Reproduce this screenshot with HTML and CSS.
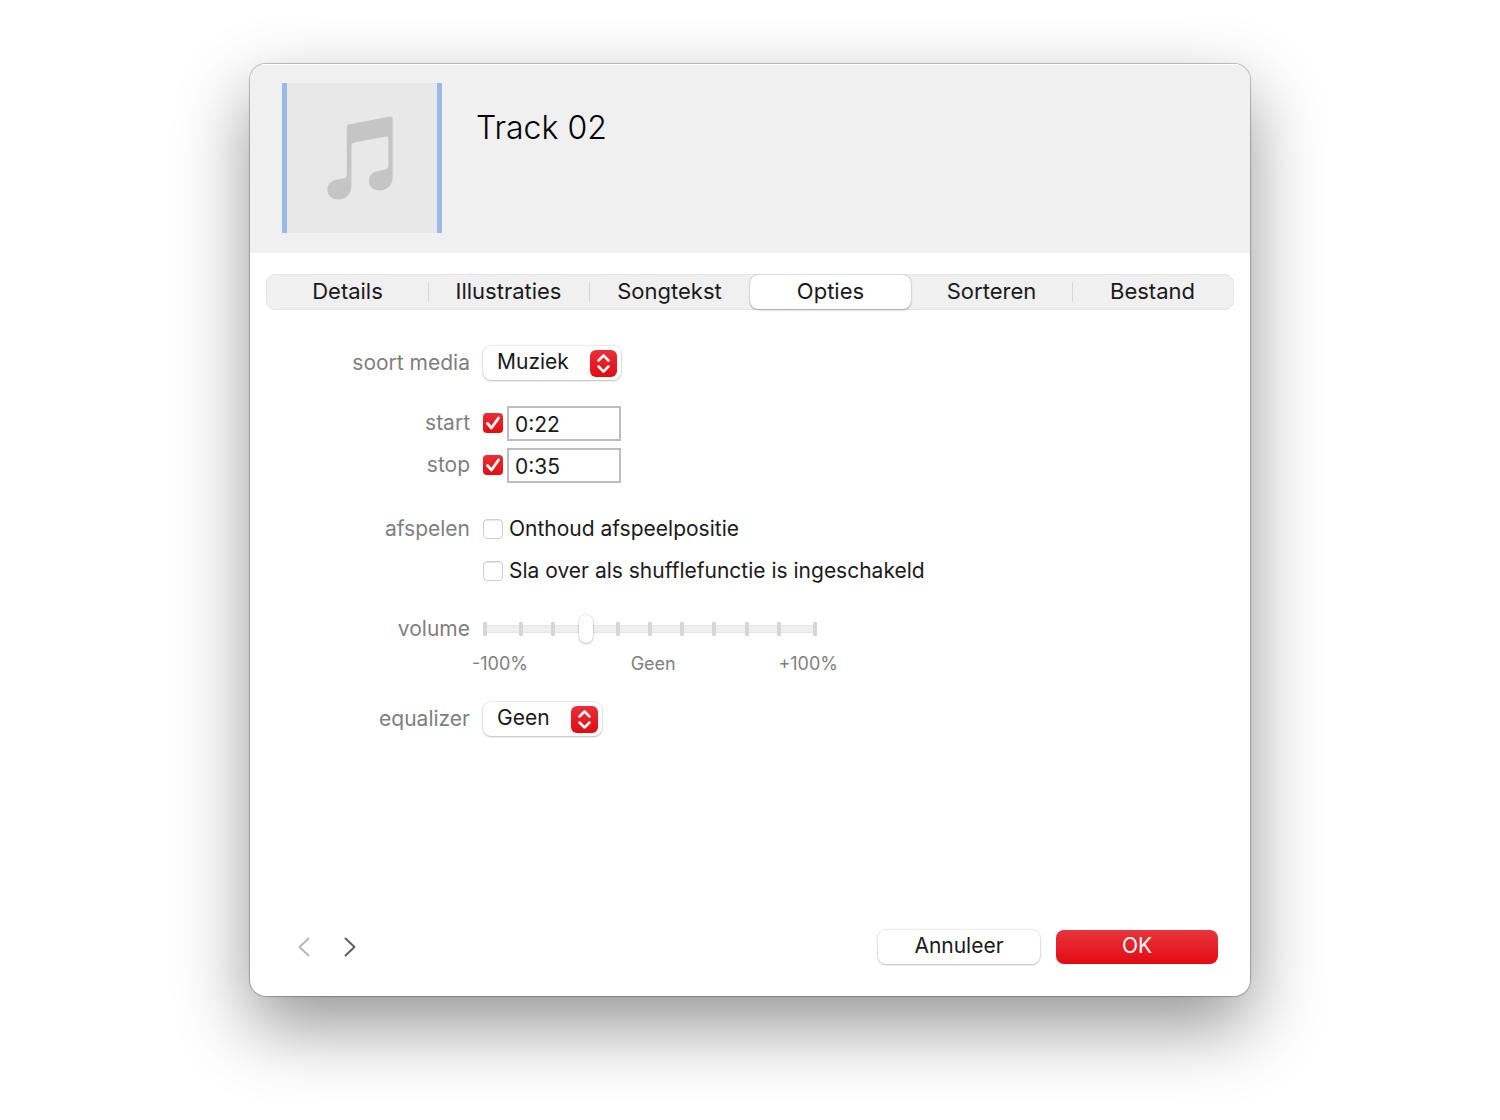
FILE: index.html
```html
<!DOCTYPE html>
<html lang="nl">
<head>
    <meta charset="UTF-8">
    <meta name="viewport" content="width=device-width, initial-scale=1.0">
    <title>Track 02</title>
    <link rel="stylesheet" href="styles.css">
</head>
<body>
    <main class="dialog">
        <header class="header">
            <div class="artwork">
                <svg width="66" height="84" viewBox="49 33 197 250" aria-hidden="true">
                    <path fill="#c5c5c5" d="M108 66Q108 60 114 58L236 34Q245 33 245 42V215C245 240 228 255 207 255C188 255 174 243 174 226C174 209 186 199 205 196L222 193Q232 191 232 180V99Q232 93 226 94L130 112Q122 114 122 121V240C122 266 104 282 82 282C64 282 50 270 50 253C50 236 62 225 80 222L98 219Q108 217 108 207Z"/>
                </svg>
            </div>
            <h1 class="title">Track 02</h1>
        </header>

        <nav class="tabs">
            <button class="tab" type="button">Details</button>
            <button class="tab divided" type="button">Illustraties</button>
            <button class="tab divided" type="button">Songtekst</button>
            <button class="tab active" type="button">Opties</button>
            <button class="tab" type="button">Sorteren</button>
            <button class="tab divided" type="button">Bestand</button>
        </nav>

        <form class="options">
            <div class="group">
                <div class="row">
                    <label class="label" for="media">soort media</label>
                    <div class="popup">
                        <select class="select" id="media">
                            <option>Muziek</option>
                        </select>
                        <svg class="arrows" width="27" height="27" viewBox="0 0 27 27" aria-hidden="true">
                            <path d="M8.5 10.5L13.5 5.5L18.5 10.5M8.5 16.5L13.5 21.5L18.5 16.5"/>
                        </svg>
                    </div>
                </div>
            </div>

            <div class="group">
                <div class="row">
                    <label class="label" for="start">start</label>
                    <div class="time">
                        <input class="check" type="checkbox" aria-label="start" checked>
                        <input class="field" type="text" id="start" value="0:22">
                    </div>
                </div>
                <div class="row">
                    <label class="label" for="stop">stop</label>
                    <div class="time">
                        <input class="check" type="checkbox" aria-label="stop" checked>
                        <input class="field" type="text" id="stop" value="0:35">
                    </div>
                </div>
            </div>

            <div class="group playback">
                <div class="row">
                    <span class="label">afspelen</span>
                    <label class="choice"><input class="check" type="checkbox">Onthoud afspeelpositie</label>
                </div>
                <div class="row">
                    <span class="label"></span>
                    <label class="choice"><input class="check" type="checkbox">Sla over als shufflefunctie is ingeschakeld</label>
                </div>
            </div>

            <div class="group">
                <div class="row slider-row">
                    <label class="label" for="volume">volume</label>
                    <div class="slider">
                        <div class="ticks">
                            <i></i><i></i><i></i><i></i><i></i><i></i><i></i><i></i><i></i><i></i><i></i>
                        </div>
                        <input class="range" type="range" id="volume" min="-100" max="100" value="-40">
                    </div>
                </div>
                <div class="row scale-row">
                    <span class="label"></span>
                    <div class="scale">
                        <span>-100%</span>
                        <span>Geen</span>
                        <span>+100%</span>
                    </div>
                </div>
            </div>

            <div class="group">
                <div class="row">
                    <label class="label" for="equalizer">equalizer</label>
                    <div class="popup">
                        <select class="select" id="equalizer">
                            <option>Geen</option>
                        </select>
                        <svg class="arrows" width="27" height="27" viewBox="0 0 27 27" aria-hidden="true">
                            <path d="M8.5 10.5L13.5 5.5L18.5 10.5M8.5 16.5L13.5 21.5L18.5 16.5"/>
                        </svg>
                    </div>
                </div>
            </div>
        </form>

        <footer class="footer">
            <button class="arrow" type="button" aria-label="Vorige" disabled>
                <svg width="12" height="20" viewBox="0 0 12 20"><path d="M10.500 1.500L1.500 10L10.500 18.500"/></svg>
            </button>
            <button class="arrow" type="button" aria-label="Volgende">
                <svg width="12" height="20" viewBox="0 0 12 20"><path d="M1.500 1.500L10.500 10L1.500 18.500"/></svg>
            </button>
            <div class="actions">
                <button class="btn" type="button">Annuleer</button>
                <button class="btn primary" type="button">OK</button>
            </div>
        </footer>
    </main>
</body>
</html>
```

FILE: styles.css
```css
* {
    box-sizing: border-box;
}

body {
    margin: 0;
    background-color: #fff;
    color: #1a1a1a;
    font-family: Inter, "Liberation Sans", sans-serif;
    font-size: 21px;
    line-height: 28px;
}

button,
input,
select {
    font: inherit;
    color: inherit;
}

.dialog {
    display: flex;
    flex-direction: column;
    width: 66.6667%;
    min-width: 760px;
    min-height: calc(100vh - 188px);
    margin: 64px auto 124px;
    overflow: hidden;
    background-color: #fff;
    border-radius: 16px;
    box-shadow: 0 0 1px 1px rgba(0, 0, 0, 0.24), 0 30px 72px rgba(0, 0, 0, 0.42);
}

.header {
    display: flex;
    gap: 34px;
    padding: 19px 32px 20px;
    background-color: #f0f0f0;
    box-shadow: inset 0 1px 0 #fff;
}

.artwork {
    display: flex;
    justify-content: center;
    align-items: center;
    width: 160px;
    height: 150px;
    padding-right: 5px;
    background-color: #e8e8e8;
    border: solid #9bb9e6;
    border-width: 0 5px;
}

.title {
    margin: 24px 0 0;
    color: #000;
    font-size: 32px;
    font-weight: 300;
    line-height: 42px;
}

.tabs {
    display: grid;
    grid-template-columns: repeat(6, 1fr);
    margin: 21px 16px 0;
    background-color: #f0f0f0;
    border: 1px solid #e6e6e6;
    border-radius: 9px;
    font-size: 22px;
}

.tab {
    height: 34px;
    padding: 0 0 2px;
    background: none;
    border: 0;
}

.divided {
    background: linear-gradient(#d6d6d6, #d6d6d6) left center / 1px 20px no-repeat;
}

.active {
    background-color: #fff;
    border-radius: 8px;
    box-shadow: 0 0 1px rgba(0, 0, 0, 0.3), 0 1px 2px rgba(0, 0, 0, 0.3);
}

.options {
    display: flex;
    flex-direction: column;
    gap: 24px;
    padding: 35px 16px 0 0;
}

.group {
    display: flex;
    flex-direction: column;
    gap: 6px;
}

.playback {
    margin-top: 4px;
}

.row {
    display: grid;
    grid-template-columns: 220px 1fr;
    gap: 13px;
    align-items: center;
    min-height: 36px;
}

.label {
    color: #7f7f7f;
    text-align: right;
}

.popup {
    display: grid;
    align-items: center;
    justify-self: start;
}

.select {
    grid-area: 1 / 1;
    height: 34px;
    padding: 0 52px 2px 14px;
    appearance: none;
    background-color: #fff;
    border: 0;
    border-radius: 8px;
    box-shadow: 0 0 1px 1px rgba(0, 0, 0, 0.08), 0 1px 2px rgba(0, 0, 0, 0.2);
}

.arrows {
    grid-area: 1 / 1;
    justify-self: end;
    margin-right: 4px;
    background: linear-gradient(#e8303a, #e30b13);
    border-radius: 6px;
    pointer-events: none;
}

.arrows path {
    fill: none;
    stroke: #fff;
    stroke-width: 2.5;
    stroke-linecap: round;
    stroke-linejoin: round;
}

.time {
    display: flex;
    align-items: center;
    gap: 4px;
}

.check {
    flex: none;
    width: 20px;
    height: 20px;
    margin: 0;
    appearance: none;
    background-color: #fff;
    border: 1px solid #cfcfcf;
    border-radius: 4px;
    box-shadow: inset 0 1px 1px rgba(0, 0, 0, 0.1);
}

.check:checked {
    background: url("data:image/svg+xml,%3Csvg xmlns='http://www.w3.org/2000/svg' viewBox='0 0 20 20'%3E%3Cpath d='M4.500 10.500L8.500 15L15.500 5' fill='none' stroke='white' stroke-width='2.800' stroke-linecap='round' stroke-linejoin='round'/%3E%3C/svg%3E") center / 20px no-repeat, linear-gradient(#e8303a, #e30b13);
    border: 0;
    box-shadow: none;
}

.field {
    width: 114px;
    height: 35px;
    padding: 2px 6px 0;
    background-color: #fff;
    border: 2px solid #bdbdbd;
    border-radius: 0;
}

.choice {
    display: flex;
    align-items: center;
    gap: 6px;
}

.slider-row {
    min-height: 32px;
}

.slider {
    display: grid;
    align-items: center;
    width: 334px;
}

.ticks {
    grid-area: 1 / 1;
    display: flex;
    justify-content: space-between;
    background: linear-gradient(#e2e2e2, #f0f0f0 2px, #f0f0f0 6px, #e2e2e2) center / 100% 8px no-repeat;
}

.ticks i {
    width: 4px;
    height: 14px;
    background-color: #d6d6d6;
    border-radius: 1px;
}

.ticks i:first-child {
    margin-right: 4px;
}

.ticks i:last-child {
    margin-left: 4px;
}

.range {
    grid-area: 1 / 1;
    width: 100%;
    height: 28px;
    margin: 0;
    appearance: none;
    background: none;
}

.range::-webkit-slider-thumb {
    width: 14px;
    height: 28px;
    appearance: none;
    background-color: #fff;
    border-radius: 7px;
    box-shadow: 0 0 1px 1px rgba(0, 0, 0, 0.08), 0 1px 2px rgba(0, 0, 0, 0.2);
}

.scale-row {
    min-height: 26px;
}

.scale {
    display: flex;
    justify-content: space-between;
    width: 366px;
    margin-left: -11px;
    color: #7f7f7f;
    font-size: 18px;
    line-height: 20px;
}

.footer {
    display: flex;
    align-items: center;
    gap: 34px;
    margin-top: auto;
    padding: 0 32px 32px 48px;
}

.arrow {
    display: flex;
    padding: 0;
    background: none;
    border: 0;
}

.arrow path {
    fill: none;
    stroke: #606060;
    stroke-width: 2;
    stroke-linecap: round;
    stroke-linejoin: round;
}

.arrow:disabled path {
    stroke: #b8b8b8;
}

.actions {
    display: flex;
    gap: 16px;
    margin-left: auto;
}

.btn {
    width: 162px;
    height: 34px;
    padding: 0 0 2px;
    background-color: #fff;
    border: 0;
    border-radius: 8px;
    box-shadow: 0 0 1px 1px rgba(0, 0, 0, 0.08), 0 1px 2px rgba(0, 0, 0, 0.2);
}

.primary {
    background: linear-gradient(#e8343b, #e30b13);
    box-shadow: none;
    color: #fff;
}
```
